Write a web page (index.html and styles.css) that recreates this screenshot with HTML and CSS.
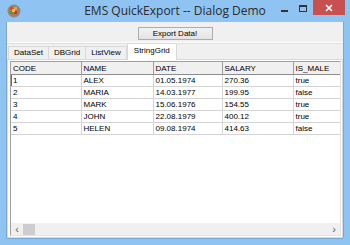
FILE: index.html
```
<!DOCTYPE html>
<html lang="en">
  <head>
    <meta charset="UTF-8" />
    <title>EMS QuickExport -- Dialog Demo</title>
    <link rel="stylesheet" href="styles.css">
  </head>
  <body>
    <div class="window">
      <div class="titlebar">
        <div class="app-icon">
          <svg width="14" height="14" viewBox="0 0 14 14">
            <circle cx="7" cy="7" r="6.5" fill="#8a8a8a" />
            <circle cx="7" cy="7" r="5.2" fill="#b07a5a" />
            <rect x="3" y="3" width="3" height="3" fill="#d9482a" />
            <rect x="7" y="3" width="3" height="3" fill="#e8a030" />
            <rect x="3" y="7" width="3" height="3" fill="#4f9a3a" />
            <rect x="7" y="7" width="3" height="3" fill="#c83a2a" />
            <rect x="5" y="5" width="3" height="3" fill="#f0c040" />
          </svg>
        </div>
        <div class="title">EMS QuickExport -- Dialog Demo</div>
        <div class="controls">
          <span class="ctl-min"></span>
          <span class="ctl-max"></span>
          <span class="ctl-close">
            <svg width="8" height="8" viewBox="0 0 8 8">
              <path d="M1 1 L7 7 M7 1 L1 7" stroke="#fff" stroke-width="1.6" />
            </svg>
          </span>
        </div>
      </div>

      <div class="client">
        <div class="toolbar">
          <button class="btn">Export Data!</button>
        </div>

        <div class="tabs">
          <div class="tab">DataSet</div>
          <div class="tab">DBGrid</div>
          <div class="tab">ListView</div>
          <div class="tab active">StringGrid</div>
        </div>

        <div class="page">
          <div class="grid">
            <table>
              <colgroup>
                <col class="c1" /><col class="c2" /><col class="c3" /><col class="c4" /><col class="c5" />
              </colgroup>
              <thead>
                <tr><th>CODE</th><th>NAME</th><th>DATE</th><th>SALARY</th><th>IS_MALE</th></tr>
              </thead>
              <tbody>
                <tr><td class="focus">1</td><td>ALEX</td><td>01.05.1974</td><td>270.36</td><td>true</td></tr>
                <tr><td>2</td><td>MARIA</td><td>14.03.1977</td><td>199.95</td><td>false</td></tr>
                <tr><td>3</td><td>MARK</td><td>15.06.1976</td><td>154.55</td><td>true</td></tr>
                <tr><td>4</td><td>JOHN</td><td>22.08.1979</td><td>400.12</td><td>true</td></tr>
                <tr><td>5</td><td>HELEN</td><td>09.08.1974</td><td>414.63</td><td>false</td></tr>
              </tbody>
            </table>
            <div class="hscroll">
              <span class="arrow">&lsaquo;</span>
              <span class="thumb"></span>
              <span class="track"></span>
              <span class="arrow">&rsaquo;</span>
            </div>
          </div>
        </div>
      </div>
    </div>
  </body>
</html>
```
FILE: styles.css
```
body {
  margin: 0;
  font-family: "Liberation Sans", Arial, sans-serif;
}
.window {
  width: 350px;
  height: 245px;
  background: #8ec3f2;
  display: flex;
  flex-direction: column;
}
.titlebar {
  height: 22px;
  display: flex;
}
.app-icon {
  width: 80px;
  box-sizing: border-box;
  padding: 4px 0 0 7px;
}
.title {
  flex: 1;
  text-align: center;
  font-family: "Open Sans", "Noto Sans", sans-serif;
  font-size: 12px;
  color: #2b2b2b;
  line-height: 22px;
}
.controls {
  width: 80px;
  display: flex;
  justify-content: flex-end;
  align-items: flex-start;
  padding-right: 5px;
  box-sizing: border-box;
}
.ctl-min {
  width: 7px;
  height: 2px;
  background: #333;
  margin: 10px 11px 0 0;
}
.ctl-max {
  width: 6px;
  height: 4px;
  border: 1px solid #333;
  border-top-width: 2px;
  margin: 5px 6px 0 0;
}
.ctl-close {
  width: 32px;
  height: 15px;
  background: #c75050;
  display: flex;
  align-items: center;
  justify-content: center;
}
.client {
  flex: 1;
  margin: 0 7px 7px;
  background: #f0f0f0;
  display: flex;
  flex-direction: column;
  font-size: 8px;
  box-shadow: -1px 0 0 #7aa8d0, 1px 0 0 #7aa8d0, 0 1px 0 #7aa8d0;
}
.toolbar {
  height: 21px;
  box-sizing: border-box;
  padding-top: 5px;
  display: flex;
  justify-content: center;
  border-bottom: 1px solid #fcfcfc;
  box-shadow: 0 1px 0 #e0e0e0;
}
.btn {
  width: 75px;
  height: 13px;
  padding: 0;
  font-family: inherit;
  font-size: 8px;
  color: #000;
  border: 1px solid #acacac;
  background: linear-gradient(#f2f2f2, #e3e3e3);
}
.tabs {
  height: 16px;
  display: flex;
  align-items: flex-end;
  padding-left: 1px;
}
.tab {
  height: 13px;
  box-sizing: border-box;
  line-height: 12px;
  padding: 0 5px;
  border: 1px solid #d9d9d9;
  border-bottom: none;
  margin-right: -1px;
  background: #f0f0f0;
}
.tab.active {
  height: 17px;
  margin-bottom: -1px;
  line-height: 13px;
  background: #fff;
  margin-left: 1px;
  padding: 0 6px;
  position: relative;
}
.page {
  flex: 1;
  display: flex;
  background: #fff;
  border: 1px solid #d9d9d9;
  padding: 1px 1px 1px 2px;
}
.grid {
  flex: 1;
  border: 1px solid #a0a0a0;
  border-right-color: #e3e3e3;
  border-bottom-color: #e3e3e3;
  background: #fff;
  overflow: hidden;
  display: flex;
  flex-direction: column;
}
table {
  border-collapse: collapse;
  table-layout: fixed;
  width: 352px;
}
.c1 { width: 70px; }
.c2 { width: 72px; }
.c3 { width: 69px; }
.c4 { width: 71px; }
.c5 { width: 70px; }
th,
td {
  height: 11px;
  padding: 0 2px;
  text-align: left;
  font-weight: normal;
  font-size: 8px;
  line-height: 11px;
  white-space: nowrap;
  border-right: 1px solid #d4d4d4;
  border-bottom: 1px solid #d4d4d4;
}
th {
  height: 12px;
  background: #f0f0f0;
  border-right-color: #a0a0a0;
  border-bottom-color: #8c8c8c;
}
td.focus {
  box-shadow: inset 1px 0 0 #666;
}
.hscroll {
  margin-top: auto;
  height: 12px;
  background: #f0f0f0;
  display: flex;
  align-items: center;
}
.arrow {
  width: 12px;
  text-align: center;
  font-size: 11px;
  line-height: 12px;
  color: #606060;
}
.thumb {
  width: 12px;
  height: 11px;
  background: #cdcdcd;
}
.track {
  flex: 1;
}
```
